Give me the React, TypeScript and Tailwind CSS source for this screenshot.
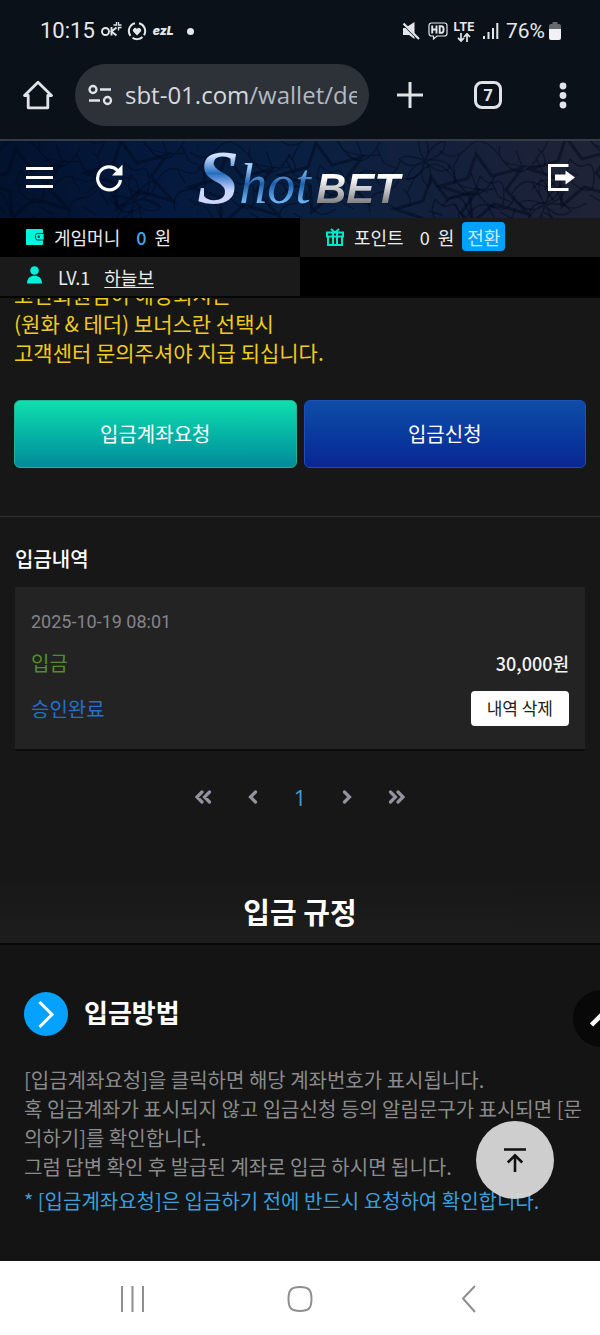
import React from "react";

const FONT = "font-['Noto_Sans_CJK_KR','Noto_Sans',sans-serif]";

function StatusBar() {
  return (
    <div className="flex h-[62px] items-center justify-between pr-[39px] pl-10 font-[Roboto,'Noto_Sans_CJK_KR',sans-serif] text-[#e4e7ea]">
      <div className="flex items-center">
        <span className="text-[22px] leading-6">10:15</span>
        <svg className="ml-[6px]" width="22" height="22" viewBox="0 0 22 22" fill="none" stroke="currentColor" strokeWidth="1.9">
          <circle cx="4.5" cy="11.500" r="3.500" />
          <path d="M10.500 7v8.500M15.500 7.500l-5 4 5 4" />
          <path d="M12.500 5h3V2M17.500 2v3h3M20.500 7.500h-3v3" strokeWidth="1.300" />
        </svg>
        <svg className="ml-[4px]" width="20" height="20" viewBox="0 0 20 20" fill="none" stroke="currentColor" strokeWidth="2">
          <path d="M8 2.200A8 8 0 0 0 3.500 14.800M5.500 16.700A8 8 0 0 0 15.500 16M17 14.200A8 8 0 0 0 12 2.300" />
          <path d="M10 14.500 6.200 10.600a2.200 2.200 0 0 1 3.800-2.600 2.200 2.200 0 0 1 3.800 2.600z" fill="currentColor" stroke="none" />
        </svg>
        <span className="ml-[6px] font-['Inter',sans-serif] text-xs leading-6 font-black italic">ezL</span>
        <span className="ml-[13px] size-[7px] rounded-full bg-[#e4e7ea]" />
      </div>
      <div className="flex items-center">
        <svg width="18" height="18" viewBox="0 0 18 18" fill="currentColor">
          <path d="M5.500 4.500 12.500 0v11.500zM1 6h2.500L12.500 15v2L7 13H1z" />
          <path d="M1.500 1.500 17 17" stroke="currentColor" strokeWidth="2.200" />
        </svg>
        <svg className="ml-2" width="20" height="18" viewBox="0 0 20 18" fill="none" stroke="currentColor" strokeWidth="1.200">
          <path d="M3.500 1h13A2.500 2.500 0 0 1 19 3.500v8a2.500 2.500 0 0 1-2.500 2.500H9l-3.500 3V14h-2A2.500 2.500 0 0 1 1 11.500v-8A2.500 2.500 0 0 1 3.500 1z" />
          <path d="M4.200 3.500v8M4.200 7.500h4M8.500 3.500v8M11.700 4.200v6.600h1.400a2.200 2.200 0 0 0 2.400-2.300v-2a2.200 2.200 0 0 0-2.400-2.300z" strokeWidth="1.900" />
        </svg>
        <span className="ml-1 flex w-[24px] flex-col items-center">
          <span className="font-['Inter',sans-serif] text-xs leading-3 font-bold">LTE</span>
          <svg width="14" height="9" viewBox="0 0 14 9" fill="none" stroke="currentColor" strokeWidth="1.700">
            <path d="M4 0v7.500M1 4.800 4 8l3-3.200M10 9V1M7 4l3-3.200L13 4" />
          </svg>
        </span>
        <svg className="ml-[6px]" width="17" height="17" viewBox="0 0 17 17" fill="currentColor">
          <path d="M1 13h2v3H1zM5.500 9h2v7h-2zM10 5h2v11h-2zM14.300 0h2v16h-2z" />
        </svg>
        <span className="ml-[7px] text-[21px] leading-6">76%</span>
        <svg className="ml-1" width="12" height="18" viewBox="0 0 12 18">
          <path d="M3.500 0h5v2H10a2 2 0 0 1 2 2v4H0V4a2 2 0 0 1 2-2h1.500z" fill="#65696e" />
          <path d="M0 7h12v9a2 2 0 0 1-2 2H2a2 2 0 0 1-2-2z" fill="#f1f1f1" />
        </svg>
      </div>
    </div>
  );
}

function BrowserBar() {
  return (
    <div className="flex h-[77px] items-start pr-[33px] pl-[23px] text-[#e0e4e9]">
      <button aria-label="Home" className="mt-[18px]">
        <svg width="30" height="30" viewBox="0 0 30 30" fill="none" stroke="currentColor" strokeWidth="2.800" strokeLinejoin="round">
          <path d="M1.500 15.500 15 2.300l13.500 13.200h-3.700v12.300H5.200V15.500z" />
        </svg>
      </button>
      <div className="mt-[2px] ml-[22px] flex h-[62px] min-w-0 flex-1 items-center rounded-full bg-[#2d3239] pr-3 pl-[13px]">
        <svg className="shrink-0" width="25" height="22" viewBox="0 0 25 22" fill="none" stroke="currentColor" strokeWidth="2.300">
          <circle cx="5" cy="5.500" r="3.500" />
          <path d="M12 5.500h11M1 16.500h11" />
          <circle cx="19.500" cy="16.500" r="3.500" />
        </svg>
        <span className="ml-3 flex-1 overflow-hidden font-['Open_Sans',sans-serif] text-2xl leading-8 whitespace-nowrap text-[#d5d9df]">
          sbt-01.com<span className="text-[#b3b9c2]">/wallet/de</span>
        </span>
      </div>
      <button aria-label="New tab" className="mt-5 ml-7">
        <svg width="26" height="26" viewBox="0 0 26 26" stroke="currentColor" strokeWidth="3">
          <path d="M13 0v26M0 13h26" />
        </svg>
      </button>
      <button aria-label="Tabs" className="mt-[19px] ml-[51px] flex size-7 items-center justify-center rounded-lg border-[3px] border-current font-['Open_Sans',sans-serif] text-base leading-5 font-bold">
        7
      </button>
      <button aria-label="More" className="mt-5 ml-[57px]">
        <svg width="8" height="27" viewBox="0 0 8 27" fill="currentColor">
          <circle cx="4" cy="4" r="3.400" />
          <circle cx="4" cy="13.500" r="3.400" />
          <circle cx="4" cy="23" r="3.400" />
        </svg>
      </button>
    </div>
  );
}

function Texture() {
  return (
    <svg className="absolute inset-0 h-full w-full" viewBox="0 0 600 77" preserveAspectRatio="none" fill="none" aria-hidden="true">
      <defs>
        <linearGradient id="sky" x1="0" x2="1">
          <stop offset="0" stopColor="#03122d" />
          <stop offset="0.250" stopColor="#04193d" />
          <stop offset="0.500" stopColor="#092042" />
          <stop offset="0.750" stopColor="#14203b" />
          <stop offset="1" stopColor="#202336" />
        </linearGradient>
        <g id="tile">
          <path d="M0 40 28 32 36 8 52 30 82 22 66 44 88 68 54 58 32 77 30 50z" strokeWidth="3" />
          <path d="M0 5q14 12 28-4t34 12 38-6M2 60q18-20 26 4t28 10M60 0q-4 14 10 18t30 2M72 48q10-18 26-10t22-12M90 77q-4-18 12-20t18-18M40 30q8 10 16 6t8 14-16 8-8-28M8 20q10 8 6 18M14 58l10 14M20 8l-8 16M96 12l8 16 14 6M100 50l-8-14M60 66l14 8M34 42l14 4M76 4l6 16M104 66l12 8" strokeWidth="1.300" />
        </g>
        <g id="flower">
          <path d="M0 0q-18-8-26-2 10 12 26 2zM0 0q-10-16-4-26Q8-16 0 0zM0 0q6-18 20-20 2 14-20 20zM0 0q18-4 26 6-12 10-26-6zM0 0q10 14 4 26Q-8 18 0 0zM0 0q-14 4-18 18Q-4 18 0 0z" strokeWidth="1.300" />
        </g>
      </defs>
      <rect width="600" height="77" fill="url(#sky)" />
      <g stroke="#01091c" strokeOpacity="0.500">
        <use href="#tile" x="-20" />
        <use href="#tile" x="85" y="-8" />
        <use href="#tile" x="190" y="6" />
        <use href="#tile" x="280" y="-6" />
        <use href="#flower" x="425" y="20" />
        <use href="#tile" x="395" y="28" />
        <use href="#tile" x="440" y="5" />
        <use href="#tile" x="530" y="-12" />
        <use href="#flower" x="545" y="64" />
        <use href="#flower" x="135" y="60" />
      </g>
    </svg>
  );
}

function SiteHeader() {
  return (
    <header className="relative grid h-[79px] grid-cols-[1fr_auto_1fr] items-center border-t-2 border-[#353c46] pr-[25px] pb-1 pl-[26px] text-white">
      <Texture />
      <div className="relative flex items-center gap-[42px]">
        <button aria-label="Menu">
          <svg width="27" height="22" viewBox="0 0 27 22" fill="currentColor">
            <path d="M0 0h27v3H0zM0 9h27v3H0zM0 18h27v3H0z" />
          </svg>
        </button>
        <button aria-label="Refresh">
          <svg width="28" height="28" viewBox="0 0 28 28">
            <path d="M25.500 16A11.500 11.500 0 1 1 22.500 6.500" fill="none" stroke="currentColor" strokeWidth="3.200" />
            <path d="M27.500 0.500v11H17z" fill="currentColor" />
          </svg>
        </button>
      </div>
      <a href="#home" className="relative flex h-[72px] items-baseline italic" aria-label="ShotBET">
        <span className="bg-linear-to-b from-[#cfe0ff] from-20% via-[#1f6fc0] via-45% to-[#cdd6ff] to-70% bg-clip-text pr-2 font-['Liberation_Serif',serif] text-[76px] leading-[70px] font-bold text-transparent">S</span>
        <span className="-ml-2 bg-linear-to-b from-[#9ccdf8] from-20% via-[#1a5fae] via-50% to-[#6ab2f0] to-80% bg-clip-text pr-2 font-['Liberation_Serif',serif] text-[56px] leading-[56px] text-transparent">hot</span>
        <span className="-ml-[3px] bg-linear-to-b from-white from-25% via-[#c9c9cb] via-50% to-[#77777a] to-85% bg-clip-text pr-1 font-['Liberation_Sans',sans-serif] text-[42px] leading-[46px] font-bold text-transparent">BET</span>
      </a>
      <button aria-label="Log out" className="relative justify-self-end">
        <svg width="27" height="27" viewBox="0 0 27 27">
          <path d="M20.500 1.500h-19v24h19" fill="none" stroke="currentColor" strokeWidth="3" />
          <path d="M7 10.500h10.500V6.500L27 13.500l-9.500 7v-4H7z" fill="currentColor" />
        </svg>
      </button>
    </header>
  );
}

function AccountInfo() {
  return (
    <div className="grid grid-cols-2 border-b-2 border-[#050505] bg-black text-lg leading-7 text-[#ececec]">
      <div className="flex h-[39px] items-center pb-[2px] pl-[26px]">
        <svg width="18" height="16" viewBox="0 0 18 16">
          <path d="M1 0h15a1 1 0 0 1 1 1v14a1 1 0 0 1-1 1H1a1 1 0 0 1-1-1V1a1 1 0 0 1 1-1z" fill="#00f5e0" />
          <path d="M18 4.500h-6.500a2 2 0 0 0-2 2v2.500a2 2 0 0 0 2 2H18z" fill="#00f5e0" stroke="#00423c" />
          <circle cx="12.800" cy="7.800" r="1.200" fill="#00423c" />
        </svg>
        <span className="ml-[10px]">게임머니</span>
        <span className="ml-4 font-medium text-[#41a9f0]">0</span>
        <span className="ml-2">원</span>
      </div>
      <div className="flex h-[39px] items-center bg-[#1a1a1a] pb-[2px] pl-[26px]">
        <svg width="18" height="18" viewBox="0 0 18 18" fill="none" stroke="#00e6c8" strokeWidth="2">
          <path d="M1 4.500h16v4H1zM2 8.500h14V17H2zM7 4.500V17M11 4.500V17M5 1l4 3.500L13 1" />
        </svg>
        <span className="ml-[10px]">포인트</span>
        <span className="ml-4">0</span>
        <span className="ml-2">원</span>
        <button className="ml-2 h-[29px] rounded-sm bg-[#00a2ff] px-[5px] text-[#c9ecff]">전환</button>
      </div>
      <div className="flex h-[39px] items-center bg-[#1a1a1a] pl-[26px]">
        <svg className="mb-1" width="17" height="18" viewBox="0 0 17 18" fill="#00f0dc">
          <circle cx="8.500" cy="4.500" r="4.300" />
          <path d="M1 17.500C1 12 4.500 9.800 8.500 9.800S16 12 16 17.500z" />
        </svg>
        <span className="ml-[15px]">LV.1</span>
        <a href="#profile" className="ml-[14px] underline underline-offset-2">하늘보</a>
      </div>
    </div>
  );
}

function Pagination() {
  const items = [
    { label: "First", d: "M8 2 3 7l5 5M15.500 2l-5 5 5 5", w: 18 },
    { label: "Previous", d: "M7.500 2l-5 5 5 5", w: 10 },
    { label: "1", d: "", w: 0 },
    { label: "Next", d: "M2.500 2l5 5-5 5", w: 10 },
    { label: "Last", d: "M2.500 2l5 5-5 5M10 2l5 5-5 5", w: 18 },
  ];
  return (
    <nav aria-label="Pagination" className="mt-[30px] flex items-center justify-center gap-[36px] text-[#95929f]">
      {items.map((it) =>
        it.d ? (
          <button key={it.label} aria-label={it.label}>
            <svg width={it.w} height="14" viewBox={`0 0 ${it.w} 14`} fill="none" stroke="currentColor" strokeWidth="3.200" strokeLinecap="round">
              <path d={it.d} />
            </svg>
          </button>
        ) : (
          <button key={it.label} aria-current="page" className="font-['Open_Sans',sans-serif] text-[22px] leading-8 text-[#3f9ed2]">
            {it.label}
          </button>
        ),
      )}
    </nav>
  );
}

function NavBar() {
  return (
    <nav className="grid h-[75px] grid-cols-[1fr_172px_1fr] items-center bg-white text-[#8e8e8e]">
      <button aria-label="Recents" className="mr-[68px] justify-self-end">
        <svg width="26" height="26" viewBox="0 0 26 26" stroke="currentColor" strokeWidth="2">
          <path d="M2 0v26M12.500 0v26M23 0v26" />
        </svg>
      </button>
      <button aria-label="Home" className="justify-self-center">
        <svg width="28" height="28" viewBox="0 0 28 28" fill="none" stroke="currentColor" strokeWidth="2">
          <path d="M14 2c8.500 0 11.500 2.500 11.500 12S22.500 26 14 26 2.500 23.500 2.500 14 5.500 2 14 2z" />
        </svg>
      </button>
      <button aria-label="Back" className="ml-[75px] justify-self-start">
        <svg width="16" height="28" viewBox="0 0 16 28" fill="none" stroke="currentColor" strokeWidth="2">
          <path d="M14 1 2 13.500 14 27" />
        </svg>
      </button>
    </nav>
  );
}

export default function App() {
  return (
    <div className={`relative overflow-hidden bg-[#171717] ${FONT}`}>
      <div className="bg-[#0b1118]">
        <StatusBar />
        <BrowserBar />
      </div>
      <SiteHeader />
      <AccountInfo />

      <main className="overflow-hidden">
        <section className="border-b border-[#303030] px-[14px] pb-12">
          <p className="-mt-[18px] text-[21px] leading-[29px] text-[#f0cb1c]">
            코인회원님이 해당되시는
            <br />
            (원화 &amp; 테더) 보너스란 선택시
            <br />
            고객센터 문의주셔야 지급 되십니다.
          </p>
          <div className="mt-[33px] grid grid-cols-2 gap-[7px] text-xl leading-8 text-white">
            <button className="h-[68px] rounded-md border border-[#1fb495] bg-linear-to-b from-[#10dfae] to-[#048a99]">입금계좌요청</button>
            <button className="h-[68px] rounded-md border border-[#1b4fc0] bg-linear-to-b from-[#0f4da6] to-[#0a2594]">입금신청</button>
          </div>
        </section>

        <section className="px-[15px] pt-7">
          <h2 className="text-xl leading-7 font-medium text-white">입금내역</h2>
          <div className="mt-[14px] border-b-2 border-[#0c0c0c] bg-[#232323] px-4 pt-[19px] pb-[23px] text-xl leading-8">
            <time className="block font-[Roboto,sans-serif] text-lg leading-8 text-[#85838c]">2025-10-19 08:01</time>
            <div className="mt-[9px] flex items-center justify-between">
              <span className="text-[#4f8f26]">입금</span>
              <span className="text-lg leading-8 font-medium text-[#f2f2f2]">30,000원</span>
            </div>
            <div className="mt-3 flex items-center justify-between">
              <span className="text-[#2270cc]">승인완료</span>
              <button className="h-[35px] rounded bg-white px-4 pb-[2px] text-[17px] text-[#222]">내역 삭제</button>
            </div>
          </div>
          <Pagination />
        </section>

        <section className="mt-[66px] bg-[#141414]">
          <h2 className="flex h-[66px] items-center justify-center border-b-2 border-[#080808] bg-linear-to-b from-[#171717] to-[#1d1d1d] text-[29px] leading-10 font-bold text-white">입금 규정</h2>
          <div className="pt-[47px] pr-4 pb-[46px] pl-6">
            <div className="flex items-center gap-4">
              <svg width="44" height="44" viewBox="0 0 44 44">
                <circle cx="22" cy="22" r="22" fill="#04a1fe" />
                <path d="M15.500 10 28 22.500 15.500 35" fill="none" stroke="#fff" strokeWidth="3" />
              </svg>
              <h3 className="pb-1 text-[26px] leading-10 font-bold text-white">입금방법</h3>
            </div>
            <p className="mt-[29px] text-xl leading-[29px] text-[#8b8b8b]">
              [입금계좌요청]을 클릭하면 해당 계좌번호가 표시됩니다.
              <br />
              혹 입금계좌가 표시되지 않고 입금신청 등의 알림문구가 표시되면 [문의하기]를 확인합니다.
              <br />
              그럼 답변 확인 후 발급된 계좌로 입금 하시면 됩니다.
            </p>
            <p className="mt-[5px] text-xl leading-[29px] text-[#3a9fdc]">* [입금계좌요청]은 입금하기 전에 반드시 요청하여 확인합니다.</p>
          </div>
        </section>
      </main>

      <NavBar />

      <button aria-label="Open panel" className="absolute -right-[30px] bottom-[289px] flex size-[57px] items-center rounded-full bg-[#080808] pl-[17px] text-white">
        <svg width="24" height="16" viewBox="0 0 24 16" fill="none" stroke="currentColor" strokeWidth="4.500">
          <path d="M1.500 14 12 3.500 22.500 14" />
        </svg>
      </button>
      <button aria-label="Scroll to top" className="absolute right-[46px] bottom-[137px] flex size-[78px] items-center justify-center rounded-full bg-[#d8d8d8]/95 text-[#111]">
        <svg width="22" height="24" viewBox="0 0 22 24" fill="none" stroke="currentColor" strokeWidth="2.600">
          <path d="M0 1.500h22M11 24V7.500M3.800 14.500 11 7.300l7.200 7.200" />
        </svg>
      </button>
    </div>
  );
}
